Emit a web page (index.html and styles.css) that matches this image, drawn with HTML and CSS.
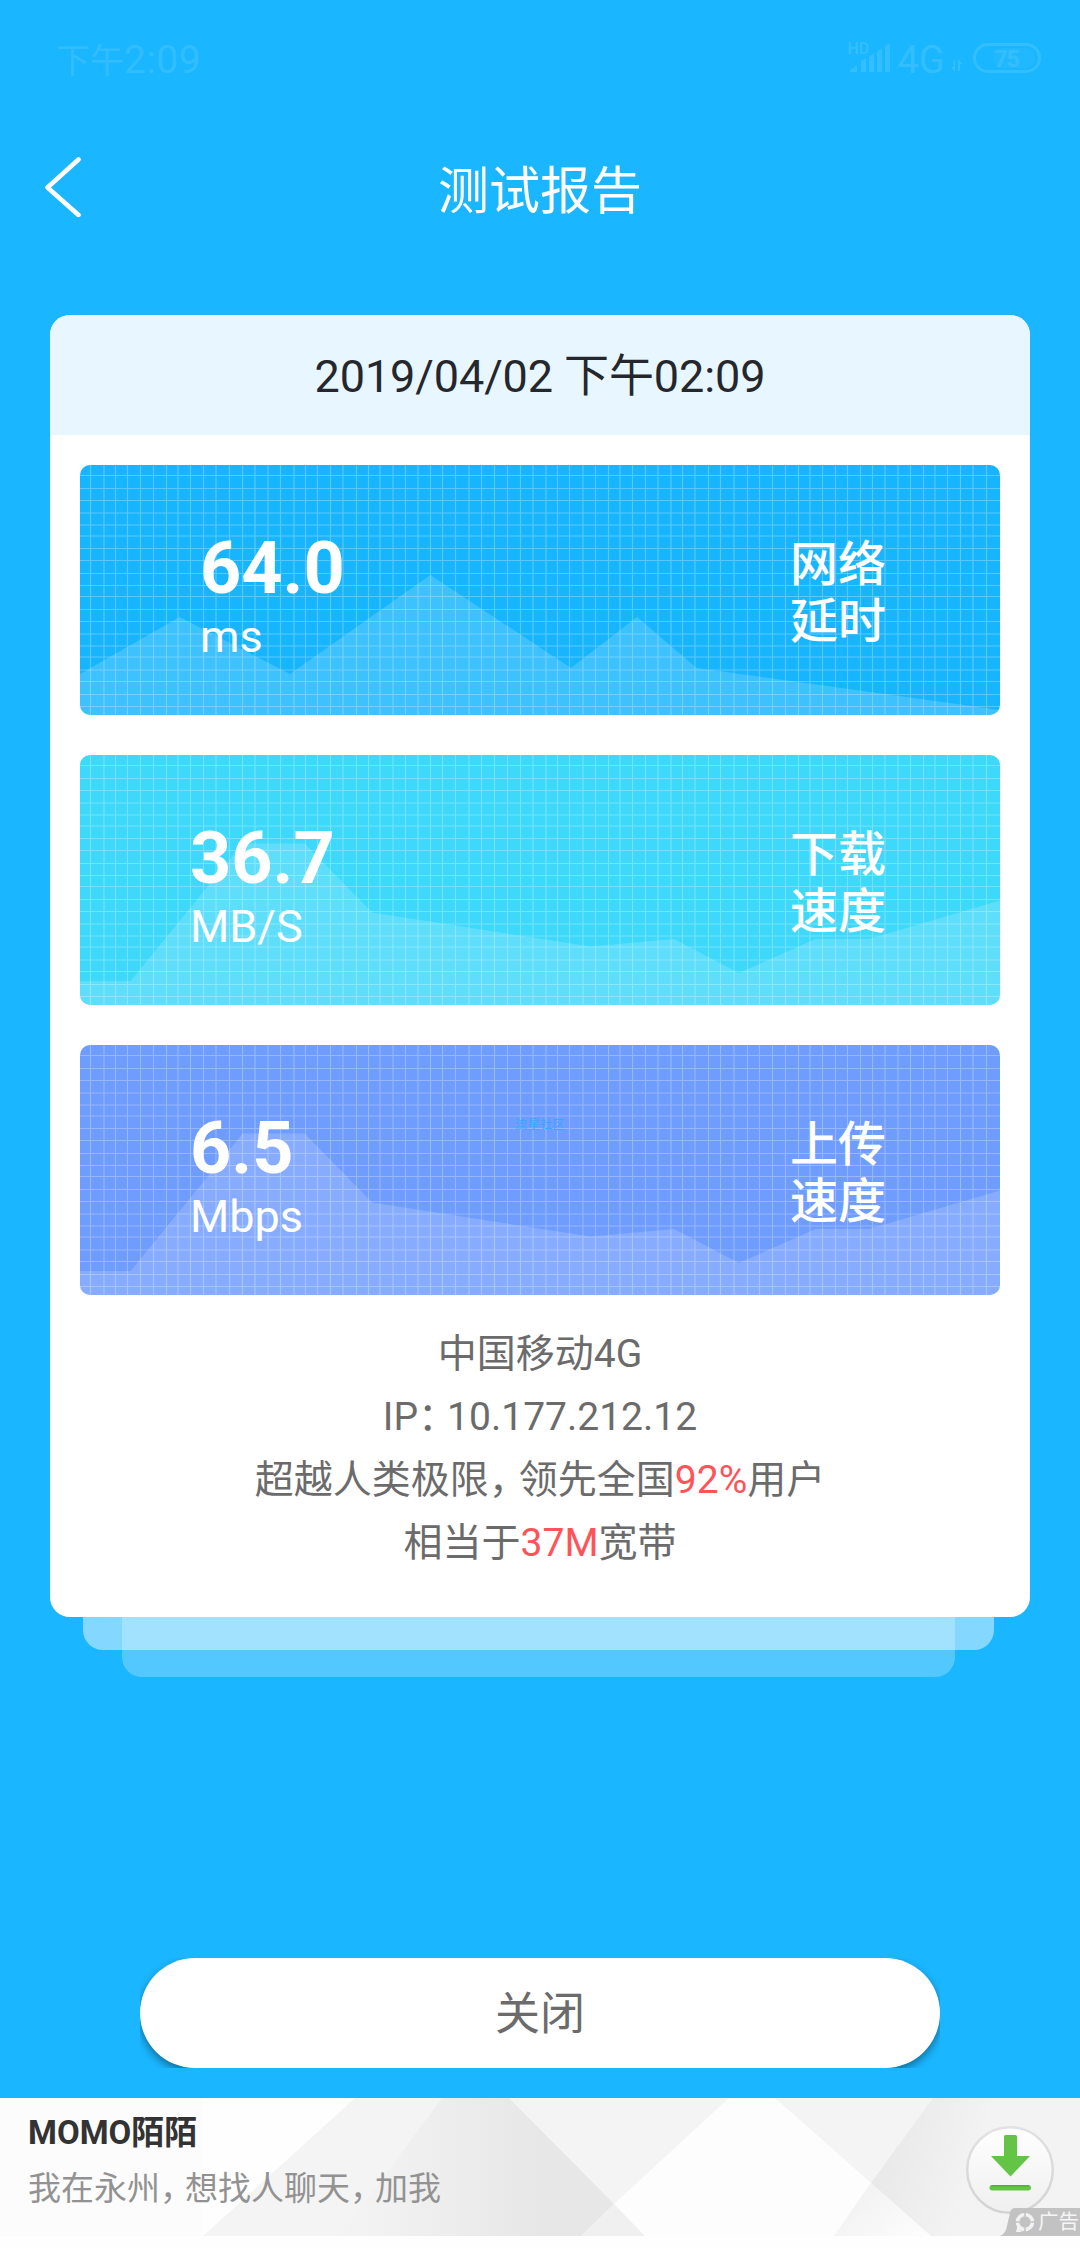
FILE: index.html
```html
<!DOCTYPE html>
<html lang="zh-CN">
<head>
<meta charset="utf-8">
<title>测试报告</title>
<link rel="stylesheet" href="styles.css">
</head>
<body>
<svg class="defs" width="0" height="0">
  <defs>
    <path id="grid" fill="none" stroke="#fff" stroke-opacity=".28" stroke-width="1.15" d="M10.5 0v250M24 0v250M35.5 0v250M47.5 0v250M60.5 0v250M73.5 0v250M86.5 0v250M98 0v250M110.5 0v250M123.5 0v250M136 0v250M149.5 0v250M162.5 0v250M175 0v250M188 0v250M200.5 0v250M214 0v250M225.5 0v250M237.5 0v250M250.5 0v250M263 0v250M276.5 0v250M288.5 0v250M300 0v250M313 0v250M325.5 0v250M338 0v250M350.5 0v250M362.5 0v250M375.5 0v250M389 0v250M401.5 0v250M414.5 0v250M427.5 0v250M440.5 0v250M453 0v250M466 0v250M477.5 0v250M489.5 0v250M503 0v250M515.5 0v250M528.5 0v250M540 0v250M552.5 0v250M565.5 0v250M578 0v250M591 0v250M602.5 0v250M615 0v250M628.5 0v250M640.5 0v250M654 0v250M667.5 0v250M679.5 0v250M692.5 0v250M705.5 0v250M718.5 0v250M730 0v250M742.5 0v250M755.5 0v250M767.5 0v250M780.5 0v250M792.5 0v250M805 0v250M818 0v250M830.5 0v250M843.5 0v250M855 0v250M867.5 0v250M880.5 0v250M893 0v250M906.5 0v250M0 10.5h920M0 23.5h920M0 35.5h920M0 48h920M0 60h920M0 71h920M0 83.5h920M0 95.5h920M0 108.5h920M0 120.5h920M0 131.5h920M0 144.5h920M0 156.5h920M0 169h920M0 181h920M0 192h920M0 205h920M0 216.5h920M0 229.5h920M0 241.5h920"/>
    <path id="speed-area" fill="#fff" fill-opacity=".17" d="M0 226H50.7L162.7 88.5H224.7L292 157.5L510.7 191.5L594 184L659 218L735.5 184H789L920 145.5V250H0Z"/>
  </defs>
</svg>
<div class="screen">
  <header class="status">
    <span class="clock">下午<span class="clock-num">2:09</span></span>
    <svg class="status-icons" width="204" height="74" viewBox="842 21 204 74">
      <g fill="#fff">
        <text x="847.5" y="53.5" font-size="16" font-weight="500">HD</text>
        <path d="M850 72v-2l7-5v7zM861 72V61l5-2.500V72zM869 72V57l5-4v19zM877 72V52l5-4v24zM885 72V46l5-3v29z"/>
        <text x="897.500" y="73" font-size="38">4G</text>
        <path d="M955 60v11h-1l-3-4h2.500v-7zM958 71V59l4.500 5h-2.500v7z"/>
        <rect x="993" y="48" width="42" height="20" rx="10" fill-opacity=".35"/>
        <text x="994" y="67" font-size="24" font-weight="700" letter-spacing="-1.500">75</text>
      </g>
      <rect x="974.5" y="44.500" width="65" height="27" rx="13.500" fill="none" stroke="#fff" stroke-width="3"/>
    </svg>
  </header>

  <nav class="titlebar">
    <svg class="back" width="36" height="60" viewBox="0 0 36 60"><path d="M33.500 2.500L2.500 30.500L33.500 58" fill="none" stroke="#fff" stroke-width="4.600" stroke-linecap="round" stroke-linejoin="round"/></svg>
    <h1 class="title">测试报告</h1>
  </nav>

  <main class="stack">
    <section class="card">
      <div class="date">2019/04/02 下午02:09</div>
      <div class="tiles">
        <article class="tile tile-delay">
          <svg class="chart" width="920" height="250"><path fill="#fff" fill-opacity=".17" d="M0 209L99.700 152L210 209L350.300 110L491 203L557 152L616.700 203L920 245V250H0Z"/><use href="#grid"/></svg>
          <div class="reading"><div class="value">64.0</div><div class="unit">ms</div></div>
          <div class="label">网络<br>延时</div>
        </article>
        <article class="tile tile-down">
          <svg class="chart" width="920" height="250"><use href="#speed-area"/><use href="#grid"/></svg>
          <div class="reading"><div class="value">36.7</div><div class="unit">MB/S</div></div>
          <div class="label">下载<br>速度</div>
        </article>
        <article class="tile tile-up">
          <svg class="chart" width="920" height="250"><use href="#speed-area"/><use href="#grid"/></svg>
          <div class="reading"><div class="value">6.5</div><div class="unit">Mbps</div></div>
          <div class="label">上传<br>速度</div>
          <span class="watermark">流星社区</span>
        </article>
      </div>
      <div class="info">
        <p>中国移动4G</p>
        <p>IP<span class="colon">：</span>10.177.212.12</p>
        <p>超越人类极限<span class="comma">，</span>领先全国<em>92%</em>用户</p>
        <p>相当于<em>37M</em>宽带</p>
      </div>
    </section>
    <div class="sheet sheet-far"></div>
    <div class="sheet sheet-near"></div>
  </main>

  <div class="close-wrap"><button class="close">关闭</button></div>

  <aside class="ad">
    <svg class="ad-bg" width="1080" height="138">
      <defs>
        <linearGradient id="g1" gradientUnits="userSpaceOnUse" x1="360" y1="0" x2="540" y2="0"><stop offset="0" stop-color="#f3f3f3"/><stop offset="1" stop-color="#e7e7e7"/></linearGradient>
        <linearGradient id="g2" gradientUnits="userSpaceOnUse" x1="880" y1="40" x2="975" y2="70"><stop offset="0" stop-color="#e8e8e8"/><stop offset="1" stop-color="#f3f3f3"/></linearGradient>
        <linearGradient id="g3" gradientUnits="userSpaceOnUse" x1="860" y1="80" x2="915" y2="138"><stop offset="0" stop-color="#f1f1f1"/><stop offset="1" stop-color="#fcfcfc"/></linearGradient>
      </defs>
      <rect width="1080" height="138" fill="#fefefe"/>
      <rect width="201" height="138" fill="#fcfcfc"/>
      <path d="M355 0H1080V138H203Z" fill="#f4f4f4"/>
      <path d="M442 0H509L614 106L581 138H340Z" fill="url(#g1)"/>
      <path d="M581 138L614 106L645 138Z" fill="#f0f0f0"/>
      <path d="M729 0H775L871 85L834 138H645L614 106Z" fill="#fdfdfd"/>
      <path d="M933 0H1080V138H931L871 85Z" fill="url(#g2)"/>
      <path d="M871 85L931 138H834Z" fill="url(#g3)"/>
    </svg>
    <div class="ad-text">
      <div class="ad-title">MOMO陌陌</div>
      <div class="ad-sub">我在永州<span class="pause">，</span>想找人聊天<span class="pause">，</span>加我</div>
    </div>
    <svg class="download" width="90" height="90" viewBox="0 0 90 90">
      <defs>
        <linearGradient id="g4" x1="0" y1="0" x2="0" y2="1"><stop offset="0" stop-color="#fff"/><stop offset="1" stop-color="#efefef"/></linearGradient>
        <linearGradient id="g5" x1="0" y1="0" x2="0" y2="1"><stop offset="0" stop-color="#e2e2e2"/><stop offset="1" stop-color="#d2d2d2"/></linearGradient>
      </defs>
      <circle cx="45" cy="45" r="42.800" fill="url(#g4)" stroke="url(#g5)" stroke-width="2.500"/>
      <path d="M40.500 10h10q1.500 0 1.500 1.500V31h13L45.500 51.500L26 31h13V11.500q0-1.500 1.500-1.500z" fill="#64c446"/>
      <rect x="24.500" y="60" width="41.500" height="5.500" rx="2.700" fill="#64c446"/>
      <path d="M26.500 60.800h37.500" stroke="#58aa44" stroke-width="1.600"/>
    </svg>
    <div class="ad-tag">
      <svg width="80" height="28"><path d="M0 28Q5 26 6.500 20L10 5Q11 0 15 0H80V28Z" fill="#c2c2c2"/>
        <circle cx="25" cy="14" r="7.500" fill="none" stroke="#f2f2f2" stroke-width="3.600"/><path d="M17.500 18l-1.500 6h6z" fill="#f2f2f2"/><path d="M25 3.500v5M25 19.500v5M14.500 14h5M30.500 14h5" stroke="#c2c2c2" stroke-width="1.600"/></svg>
      <span class="ad-tag-text">广告</span>
    </div>
  </aside>
</div>
</body>
</html>
```
FILE: styles.css
```css
* { box-sizing: border-box; margin: 0; padding: 0; }
body {
  background: #1ab6ff;
  font-family: Roboto, "Noto Sans CJK SC", sans-serif;
}
.defs { display: block; }
.screen { width: 1080px; height: 2248px; display: flex; flex-direction: column; overflow: hidden; background: #1ab6ff; }

.status { height: 120px; display: flex; justify-content: space-between; align-items: flex-start; padding: 21px 34px 0 56px; }
.clock { padding-top: 20px; font-size: 34px; line-height: 38px; color: #fff; opacity: .1; white-space: nowrap; }
.clock-num { font-size: 39px; letter-spacing: .5px; }
.status-icons { display: block; opacity: .11; }

.titlebar { height: 195px; display: flex; align-items: flex-start; padding: 37px 45px 0; }
.back { display: block; width: 36px; }
.title { flex: 1; margin-right: 36px; height: 66px; line-height: 69px; text-align: center; font-size: 51px; font-weight: 400; color: #fff; }

.stack { height: 1643px; padding: 0 50px; display: flex; flex-direction: column; align-items: center; }
.card { position: relative; z-index: 3; width: 980px; height: 1302px; flex: none; background: #fff; border-radius: 20px; overflow: hidden; }
.date { height: 120px; line-height: 124px; background: #e8f7ff; text-align: center; font-size: 45px; letter-spacing: -.1px; color: #25272d; }
.tiles { display: flex; flex-direction: column; gap: 40px; padding: 30px 30px 0; }
.tile { position: relative; height: 250px; border-radius: 10px; overflow: hidden; display: flex; justify-content: space-between; align-items: center; padding: 0 114px 0 110px; color: #fff; }
.tile-delay { background: #18b5ff; padding-left: 120px; }
.tile-down { background: #3ed8fa; }
.tile-up { background: #6f9cff; }
.chart { position: absolute; left: 0; top: 0; }
.reading, .label { position: relative; }
.reading { height: 150px; padding-top: 12px; }
.value { height: 84px; line-height: 84px; font-size: 72px; font-weight: 700; }
.unit { height: 52px; line-height: 52px; font-size: 45px; }
.label { padding-top: 6px; font-size: 48px; line-height: 57px; font-weight: 500; }
.watermark { position: absolute; left: 435px; top: 71px; font-size: 12.5px; line-height: 18px; color: #3ba6fa; white-space: nowrap; }
.info { padding-top: 28px; text-align: center; font-size: 39px; line-height: 63px; color: #6b6b6b; font-weight: 400; }
.info em { font-style: normal; color: #ff5358; }
.colon { letter-spacing: -10px; }
.comma { letter-spacing: -9px; }
.sheet { flex: none; border-radius: 0 0 20px 20px; }
.sheet-far { width: 833px; height: 60px; margin-right: 3px; background: rgba(255, 255, 255, .25); }
.sheet-near { width: 911px; height: 33px; margin: -60px 3px 0 0; background: rgba(255, 255, 255, .467); }

.close-wrap { flex: none; width: 800px; height: 110px; margin: 0 auto 30px; overflow: hidden; }
.close { display: block; width: 800px; height: 110px; padding-top: 4px; border: 0; border-radius: 55px; background: #fff; box-shadow: 0 4px 8px rgba(0, 0, 0, .4); font: 400 45px/106px Roboto, "Noto Sans CJK SC", sans-serif; color: #6b6b6b; }

.ad { position: relative; flex: none; height: 150px; background: #fefefe; }
.ad-bg { position: absolute; left: 0; top: 0; }
.ad-text { position: relative; padding: 11px 28px 0; }
.ad-title { height: 48px; line-height: 48px; font-size: 33px; font-weight: 700; color: #333; }
.ad-sub { height: 60px; line-height: 63px; font-size: 33px; font-weight: 400; color: #929292; }
.pause { letter-spacing: -8px; }
.download { position: absolute; left: 965px; top: 27px; }
.ad-tag { position: absolute; left: 1000px; top: 110px; width: 80px; height: 28px; }
.ad-tag svg { display: block; }
.ad-tag-text { position: absolute; left: 38px; top: 0; font-size: 20.5px; line-height: 28px; color: #f5f5f5; white-space: nowrap; }
```
